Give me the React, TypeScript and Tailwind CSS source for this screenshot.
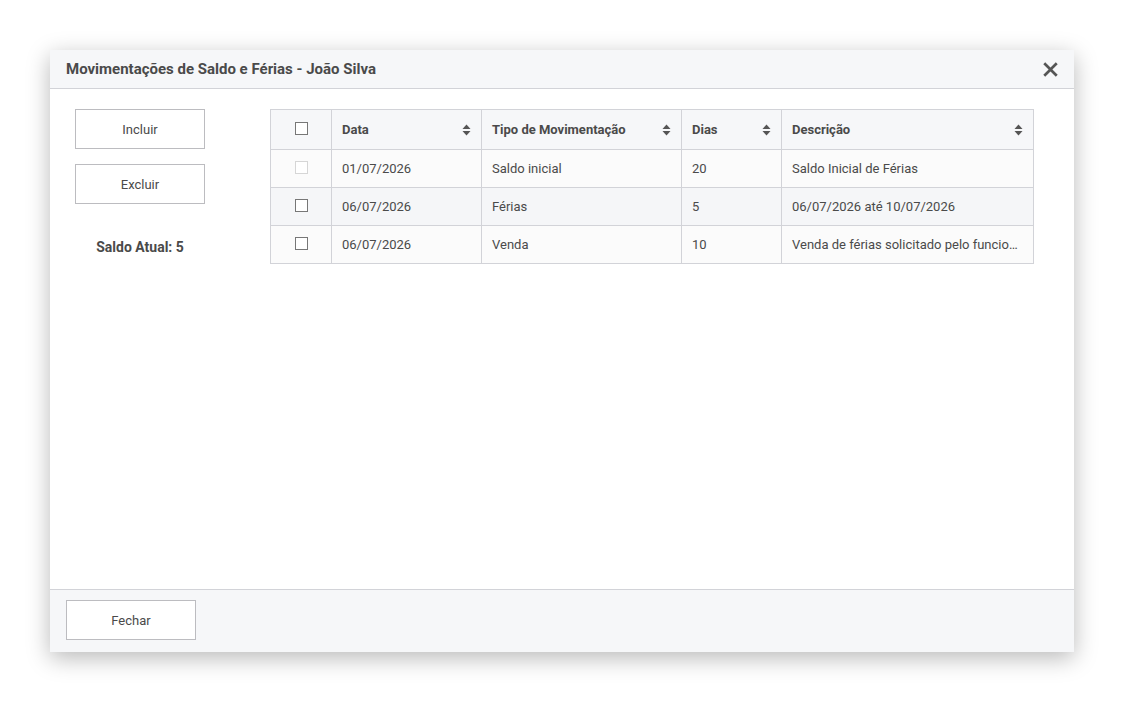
import React from 'react';

type Row = { data: string; tipo: string; dias: string; descricao: string; locked?: boolean };

const rows: Row[] = [
  { data: '01/07/2026', tipo: 'Saldo inicial', dias: '20', descricao: 'Saldo Inicial de Férias', locked: true },
  { data: '06/07/2026', tipo: 'Férias', dias: '5', descricao: '06/07/2026 até 10/07/2026' },
  { data: '06/07/2026', tipo: 'Venda', dias: '10', descricao: 'Venda de férias solicitado pelo funcionário' },
];

function SortIcon() {
  return (
    <svg width="9" height="12" viewBox="0 0 9 12" className="shrink-0 fill-[#555]">
      <path d="M4.5 0.5 L8.5 5 L0.5 5 Z" />
      <path d="M0.5 7 L8.5 7 L4.5 11.5 Z" />
    </svg>
  );
}

function CloseIcon() {
  return (
    <svg width="15" height="15" viewBox="0 0 15 15" className="fill-[#555]">
      <path d="M2.2 0.3 L7.5 5.6 L12.8 0.3 L14.7 2.2 L9.4 7.5 L14.7 12.8 L12.8 14.7 L7.5 9.4 L2.2 14.7 L0.3 12.8 L5.6 7.5 L0.3 2.2 Z" />
    </svg>
  );
}

function Box({ disabled }: { disabled?: boolean }) {
  return (
    <span
      className={
        'block w-[13px] h-[13px] border bg-white ' +
        (disabled ? 'border-[#d6d6d6]' : 'border-[#777]')
      }
    />
  );
}

function Btn({ children, className = '' }: { children: React.ReactNode; className?: string }) {
  return (
    <button
      className={
        'w-[130px] h-[40px] pt-[2px] border border-[#bcbcc0] bg-white text-[13px] text-[#4a4a4a] ' + className
      }
    >
      {children}
    </button>
  );
}

function Th({ label, width }: { label: string; width: string }) {
  return (
    <th className={'border border-[#d2d3d8] px-[10px] h-[40px] text-left font-bold ' + width}>
      <div className="flex items-center justify-between">
        <span>{label}</span>
        <SortIcon />
      </div>
    </th>
  );
}

export default function App() {
  return (
    <div className="w-[1124px] h-[702px] bg-white pt-[50px] pl-[50px] font-['Roboto',sans-serif] text-[#444]">
      <div className="w-[1024px] h-[602px] flex flex-col bg-white shadow-[0_6px_22px_rgba(0,0,0,0.28)]">
        <div className="h-[39px] shrink-0 flex items-center justify-between pl-4 pr-[16px] bg-[#f6f7f9] border-b border-[#d2d3d8]">
          <h1 className="text-[15px] font-bold text-[#4a4a4a] mt-[1px]">
            Movimentações de Saldo e Férias - João Silva
          </h1>
          <CloseIcon />
        </div>

        <div className="flex-1 flex pt-5 pl-[25px]">
          <div className="w-[130px] flex flex-col gap-[15px]">
            <Btn>Incluir</Btn>
            <Btn>Excluir</Btn>
            <p className="text-[14px] font-bold text-center text-[#4a4a4a] mt-[18px]">Saldo Atual: 5</p>
          </div>

          <table className="ml-[65px] w-[763px] h-fit border-collapse table-fixed text-[13px] text-[#4a4a4a]">
            <thead>
              <tr className="bg-[#f6f7f9]">
                <th className="w-[61px] border border-[#d2d3d8] h-[40px]">
                  <div className="flex justify-center -mt-[3px]">
                    <Box />
                  </div>
                </th>
                <Th label="Data" width="w-[150px]" />
                <Th label="Tipo de Movimentação" width="w-[200px]" />
                <Th label="Dias" width="w-[100px]" />
                <Th label="Descrição" width="w-[252px]" />
              </tr>
            </thead>
            <tbody>
              {rows.map((r, i) => (
                <tr key={i} className={i % 2 === 0 ? 'bg-[#fbfbfb]' : 'bg-[#f5f6f8]'}>
                  <td className="border border-[#d2d3d8] h-[38px]">
                    <div className="flex justify-center -mt-[3px]">
                      <Box disabled={r.locked} />
                    </div>
                  </td>
                  <td className="border border-[#d2d3d8] px-[10px]">{r.data}</td>
                  <td className="border border-[#d2d3d8] px-[10px]">{r.tipo}</td>
                  <td className="border border-[#d2d3d8] px-[10px]">{r.dias}</td>
                  <td className="border border-[#d2d3d8] px-[10px] truncate">{r.descricao}</td>
                </tr>
              ))}
            </tbody>
          </table>
        </div>

        <div className="h-[63px] shrink-0 flex items-start pt-[10px] pl-4 bg-[#f6f7f9] border-t border-[#d2d3d8]">
          <Btn>Fechar</Btn>
        </div>
      </div>
    </div>
  );
}
